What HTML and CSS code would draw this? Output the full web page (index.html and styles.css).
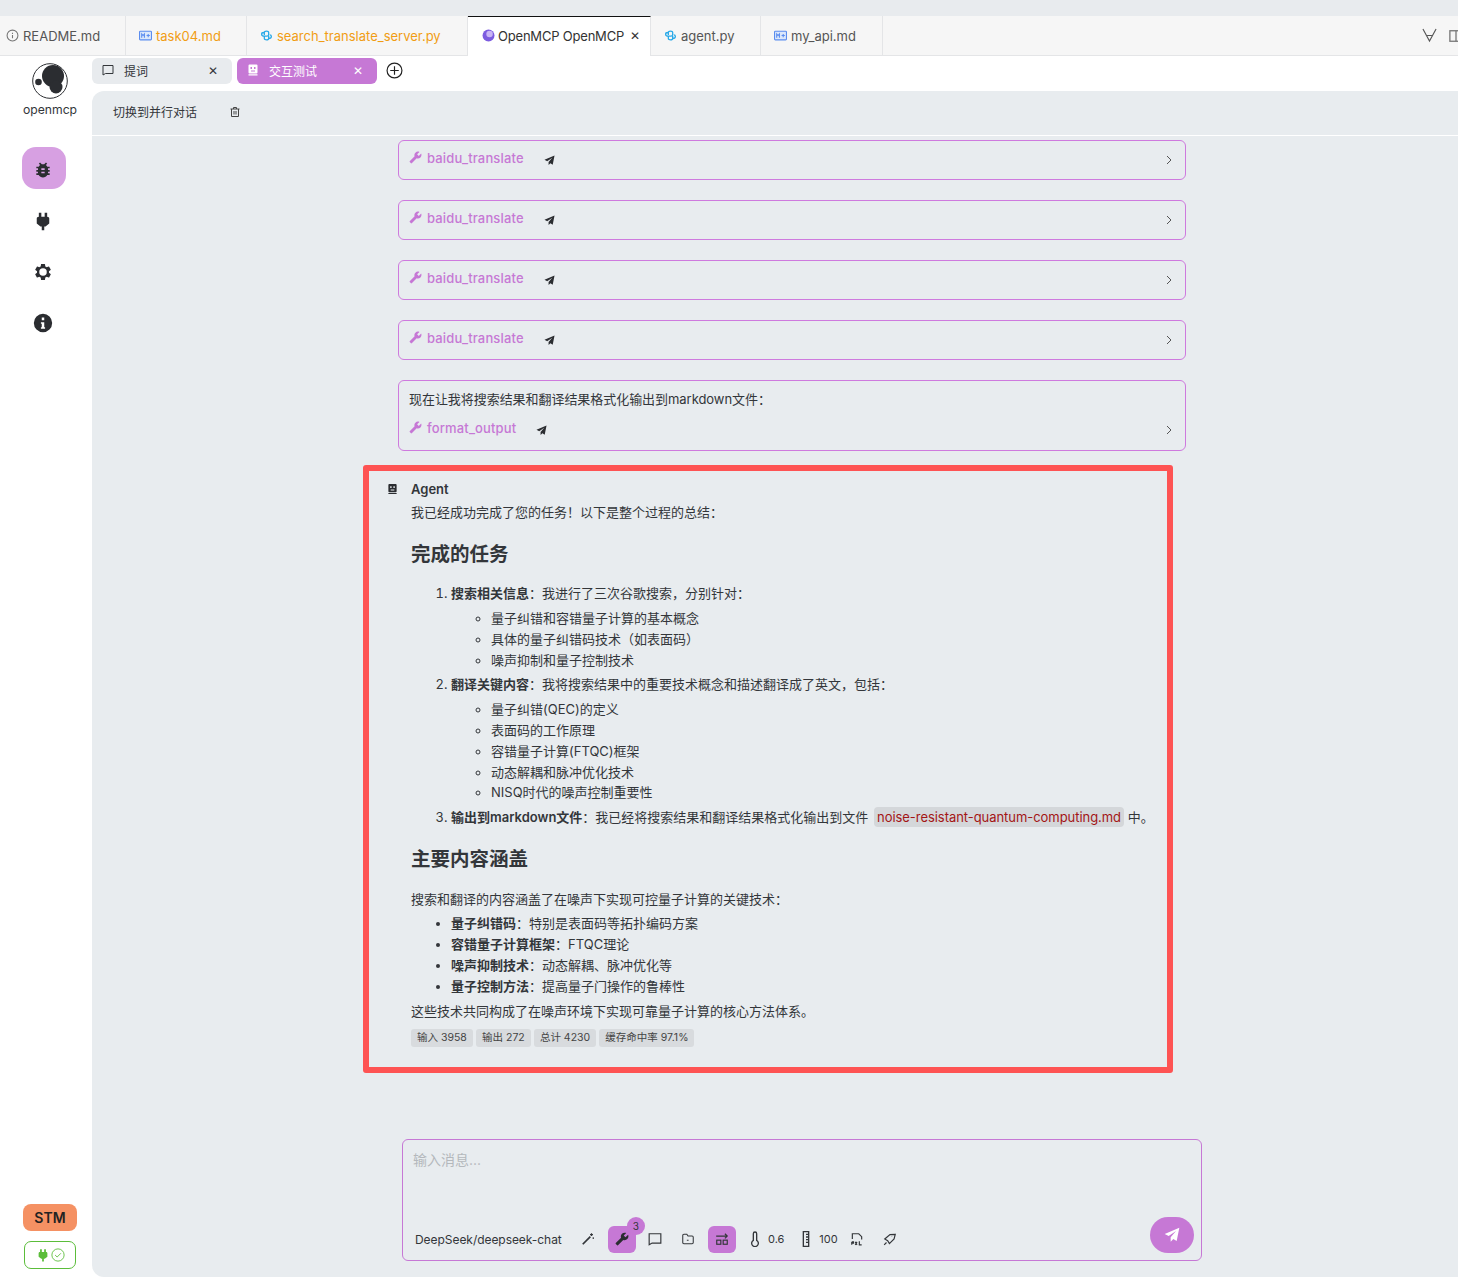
FILE: index.html
```html
<!DOCTYPE html>
<html lang="en">

<head>
  <meta charset="UTF-8">
  <meta name="viewport" content="width=device-width, initial-scale=1.0">
  <title>OpenMCP</title>
  <link rel="stylesheet" href="styles.css">
</head>

<body>
  <svg class="defs" aria-hidden="true">
    <symbol id="i-wrench" viewBox="0 0 24 24"><path transform="translate(24 0) scale(-1 1)" d="M22.7 19l-9.1-9.1c.9-2.3.4-5-1.5-6.9-2-2-5-2.4-7.4-1.3L9 6 6 9 1.6 4.7C.4 7.1.9 10.1 2.9 12.1c1.9 1.9 4.6 2.4 6.9 1.5l9.1 9.1c.4.4 1 .4 1.4 0l2.3-2.3c.5-.4.5-1.1.1-1.4z"/></symbol>
    <symbol id="i-send" viewBox="0 0 24 24"><path d="M23 1L1 10.5l6 3L18 6l-8 9.5V22l4-4 5 3z"/></symbol>
    <symbol id="i-robot" viewBox="0 0 24 24"><path fill-rule="evenodd" d="M5 1h14a2 2 0 0 1 2 2v14a2 2 0 0 1-2 2H5a2 2 0 0 1-2-2V3a2 2 0 0 1 2-2zM7 6v4h3V6zm7 0v4h3V6zM8 13v2h8v-2zM3 20.500h18V23H3z"/></symbol>
    <symbol id="i-python" viewBox="0 0 24 24"><path fill="none" stroke="#29a9e8" stroke-width="2.400" d="M8 11V6.500C8 3 16 3 16 6.500V10c0 2-1 3-3 3H8c-3 0-5-1-5-3.500C3 7 5 6.500 7 6.500M16 13v4.500C16 21 8 21 8 17.500V14M16 17.500c2 0 5-.5 5-3.500 0-2-1-3-3-3"/></symbol>
    <symbol id="i-md" viewBox="0 0 24 24"><rect x="1" y="4" width="22" height="16" rx="1.500" fill="#dce8fb" stroke="#5b8def" stroke-width="2"/><path fill="none" stroke="#5b8def" stroke-width="2" d="M5 16V9l2.500 3L10 9v7M14 12h6M17 9v6"/></symbol>
  </svg>

  <div class="top-strip"></div>

  <!-- File tabs -->
  <nav class="file-tabs">
    <div class="file-tab tab-readme">
      <svg class="tab-icon" viewBox="0 0 24 24" fill="none" stroke="#777" stroke-width="2"><circle cx="12" cy="12" r="10"/><path d="M12 11v6M12 7v2"/></svg>
      README.md
    </div>
    <div class="file-tab changed tab-task"><svg class="tab-icon"><use href="#i-md"/></svg>task04.md</div>
    <div class="file-tab changed tab-search"><svg class="tab-icon"><use href="#i-python"/></svg>search_translate_server.py</div>
    <div class="file-tab active">
      <svg class="tab-icon" viewBox="0 0 24 24"><circle cx="12" cy="12" r="11" fill="#7c5be0"/><circle cx="14" cy="9" r="6" fill="#c9b4f5"/></svg>
      OpenMCP OpenMCP
      <span class="tab-close">✕</span>
    </div>
    <div class="file-tab tab-agent"><svg class="tab-icon"><use href="#i-python"/></svg>agent.py</div>
    <div class="file-tab tab-api"><svg class="tab-icon"><use href="#i-md"/></svg>my_api.md</div>
    <div class="tab-actions">
      <svg class="action-v" viewBox="0 0 16 16" fill="none" stroke="#555" stroke-width="1.200"><path d="M1 1l7 13 7-13M5.500 8h5"/></svg>
      <svg class="action-panel" viewBox="0 0 16 16" fill="none" stroke="#777" stroke-width="1.500"><rect x="1" y="2" width="14" height="12"/><path d="M8 2v12"/></svg>
    </div>
  </nav>

  <div class="app">
    <!-- Sidebar -->
    <aside class="sidebar">
      <svg class="logo" viewBox="0 0 36 36">
        <circle cx="18" cy="18" r="17.300" fill="#fff" stroke="#2b2d31" stroke-width="1"/>
        <circle cx="21" cy="13" r="11" fill="#2b2d31"/>
        <circle cx="24" cy="24" r="6.500" fill="#2b2d31"/>
        <circle cx="6.500" cy="19" r="3.300" fill="#2b2d31"/>
      </svg>
      <div class="logo-name">openmcp</div>

      <div class="side-item selected">
        <svg viewBox="0 0 24 24"><path d="M14 12h-4v-2h4m0 6h-4v-2h4m6-6h-2.810a5.985 5.985 0 0 0-1.820-1.960L17 4.410 15.590 3l-2.170 2.170a6.002 6.002 0 0 0-2.830 0L8.410 3 7 4.410l1.620 1.630C7.880 6.550 7.260 7.220 6.810 8H4v2h2.090c-.05.33-.09.66-.09 1v1H4v2h2v1c0 .34.04.67.09 1H4v2h2.810c1.040 1.790 2.970 3 5.190 3s4.150-1.210 5.190-3H20v-2h-2.090c.05-.33.09-.66.09-1v-1h2v-2h-2v-1c0-.34-.04-.67-.09-1H20V8z"/></svg>
      </div>
      <div class="side-item">
        <svg viewBox="0 0 24 24"><path d="M17 7V2h-3v5h-4V2H7v5c-1.500 0-2.500 1-2.500 2v6L9 18.500h1.500V23h3v-4.500H15l4.500-3.500V9c0-1-1-2-2.500-2z"/></svg>
      </div>
      <div class="side-item">
        <svg viewBox="0 0 24 24"><path d="M19.140 12.940c.04-.3.06-.61.06-.94 0-.32-.02-.64-.07-.94l2.030-1.580a.49.49 0 0 0 .12-.61l-1.920-3.320a.488.488 0 0 0-.59-.22l-2.390.96c-.5-.38-1.030-.7-1.620-.94l-.36-2.540a.484.484 0 0 0-.48-.41h-3.840c-.24 0-.43.17-.47.41l-.36 2.540c-.59.24-1.130.57-1.620.94l-2.390-.96c-.22-.08-.47 0-.59.22L2.740 8.870c-.12.21-.08.47.12.61l2.030 1.580c-.05.3-.09.63-.09.94s.02.64.07.94l-2.030 1.580a.49.49 0 0 0-.12.61l1.920 3.320c.12.22.37.29.59.22l2.390-.96c.5.38 1.030.7 1.620.94l.36 2.540c.05.24.24.41.48.41h3.840c.24 0 .44-.17.47-.41l.36-2.540c.59-.24 1.130-.56 1.620-.94l2.390.96c.22.08.47 0 .59-.22l1.920-3.320c.12-.22.07-.47-.12-.61l-2.010-1.580zM12 16.500a4.500 4.500 0 1 1 0-9 4.500 4.500 0 0 1 0 9z"/></svg>
      </div>
      <div class="side-item">
        <svg viewBox="0 0 24 24"><path fill-rule="evenodd" d="M12 1a11 11 0 1 1 0 22 11 11 0 0 1 0-22zm-1.500 4.500v3.200h3V5.500zm-1 5.500v2h1v4h-1v2h5v-2h-1v-6z"/></svg>
      </div>

      <div class="stm">STM</div>
      <div class="conn">
        <svg class="conn-plug" viewBox="0 0 24 24"><path d="M17 7V2h-3v5h-4V2H7v5c-1.500 0-2.500 1-2.500 2v6L9 18.500h1.500V23h3v-4.500H15l4.500-3.500V9c0-1-1-2-2.500-2z"/></svg>
        <svg class="conn-ok" viewBox="0 0 24 24" fill="none" stroke="#5bbd3a" stroke-width="1.500"><circle cx="12" cy="12" r="10.500"/><path d="M7 12l3.500 3.500L17 9"/></svg>
      </div>
    </aside>

    <div class="workspace">
      <!-- Sub tabs -->
      <div class="sub-tabs">
        <div class="sub-tab">
          <svg class="sub-icon" viewBox="0 0 24 24" fill="none" stroke="#33363a" stroke-width="2"><path d="M2 3h20v16H7l-5 3z"/></svg>
          <span class="sub-label">提词</span>
          <span class="sub-close">✕</span>
        </div>
        <div class="sub-tab current">
          <svg class="sub-icon"><use href="#i-robot"/></svg>
          <span class="sub-label">交互测试</span>
          <span class="sub-close">✕</span>
        </div>
        <svg class="sub-add" viewBox="0 0 16 16" fill="none" stroke="#222" stroke-width="1.100"><circle cx="8" cy="8" r="7"/><path d="M4 8h8M8 4v8"/></svg>
      </div>

      <main class="panel">
        <div class="panel-head">
          <span class="switch-label">切换到并行对话</span>
          <svg class="trash" viewBox="0 0 24 24" fill="none" stroke="#444" stroke-width="2"><path d="M3 6h18M9 6V3h6v3M5 6v15h14V6M10 10v7M14 10v7"/></svg>
        </div>

        <div class="chat">
          <div class="tool-box">
            <div class="tool-line">
              <svg class="tool-wrench"><use href="#i-wrench"/></svg>
              <span class="tool-name">baidu_translate</span>
              <svg class="tool-send"><use href="#i-send"/></svg>
            </div>
            <svg class="chevron" viewBox="0 0 10 10" fill="none" stroke="#555" stroke-width="1"><path d="M3 1l4 4-4 4"/></svg>
          </div>
          <div class="tool-box">
            <div class="tool-line">
              <svg class="tool-wrench"><use href="#i-wrench"/></svg>
              <span class="tool-name">baidu_translate</span>
              <svg class="tool-send"><use href="#i-send"/></svg>
            </div>
            <svg class="chevron" viewBox="0 0 10 10" fill="none" stroke="#555" stroke-width="1"><path d="M3 1l4 4-4 4"/></svg>
          </div>
          <div class="tool-box">
            <div class="tool-line">
              <svg class="tool-wrench"><use href="#i-wrench"/></svg>
              <span class="tool-name">baidu_translate</span>
              <svg class="tool-send"><use href="#i-send"/></svg>
            </div>
            <svg class="chevron" viewBox="0 0 10 10" fill="none" stroke="#555" stroke-width="1"><path d="M3 1l4 4-4 4"/></svg>
          </div>
          <div class="tool-box">
            <div class="tool-line">
              <svg class="tool-wrench"><use href="#i-wrench"/></svg>
              <span class="tool-name">baidu_translate</span>
              <svg class="tool-send"><use href="#i-send"/></svg>
            </div>
            <svg class="chevron" viewBox="0 0 10 10" fill="none" stroke="#555" stroke-width="1"><path d="M3 1l4 4-4 4"/></svg>
          </div>
          <div class="tool-box tall">
            <div class="tool-text">现在让我将搜索结果和翻译结果格式化输出到markdown文件：</div>
            <div class="tool-row">
              <div class="tool-line">
                <svg class="tool-wrench"><use href="#i-wrench"/></svg>
                <span class="tool-name">format_output</span>
                <svg class="tool-send"><use href="#i-send"/></svg>
              </div>
              <svg class="chevron" viewBox="0 0 10 10" fill="none" stroke="#555" stroke-width="1"><path d="M3 1l4 4-4 4"/></svg>
            </div>
          </div>

          <!-- Final answer -->
          <section class="answer">
            <div class="answer-head">
              <svg class="answer-icon"><use href="#i-robot"/></svg>
              <strong>Agent</strong>
            </div>
            <div class="answer-body">
              <p>我已经成功完成了您的任务！以下是整个过程的总结：</p>
              <h2>完成的任务</h2>
              <ol>
                <li><b>搜索相关信息</b>：我进行了三次谷歌搜索，分别针对：
                  <ul>
                    <li>量子纠错和容错量子计算的基本概念</li>
                    <li>具体的量子纠错码技术（如表面码）</li>
                    <li>噪声抑制和量子控制技术</li>
                  </ul>
                </li>
                <li><b>翻译关键内容</b>：我将搜索结果中的重要技术概念和描述翻译成了英文，包括：
                  <ul>
                    <li>量子纠错(QEC)的定义</li>
                    <li>表面码的工作原理</li>
                    <li>容错量子计算(FTQC)框架</li>
                    <li>动态解耦和脉冲优化技术</li>
                    <li>NISQ时代的噪声控制重要性</li>
                  </ul>
                </li>
                <li><b>输出到markdown文件</b>：我已经将搜索结果和翻译结果格式化输出到文件 <code>noise-resistant-quantum-computing.md</code> 中。</li>
              </ol>
              <h2>主要内容涵盖</h2>
              <p>搜索和翻译的内容涵盖了在噪声下实现可控量子计算的关键技术：</p>
              <ul class="topics">
                <li><b>量子纠错码</b>：特别是表面码等拓扑编码方案</li>
                <li><b>容错量子计算框架</b>：FTQC理论</li>
                <li><b>噪声抑制技术</b>：动态解耦、脉冲优化等</li>
                <li><b>量子控制方法</b>：提高量子门操作的鲁棒性</li>
              </ul>
              <p>这些技术共同构成了在噪声环境下实现可靠量子计算的核心方法体系。</p>
              <div class="usage">
                <span>输入 3958</span>
                <span>输出 272</span>
                <span>总计 4230</span>
                <span>缓存命中率 97.1%</span>
              </div>
            </div>
          </section>
        </div>

        <!-- Message input -->
        <div class="composer">
          <textarea class="composer-input" placeholder="输入消息..."></textarea>
          <div class="composer-bar">
            <span class="model">DeepSeek/deepseek-chat</span>
            <div class="bar-item">
              <svg viewBox="0 0 24 24" fill="none" stroke="#33363a" stroke-width="3"><path d="M3 21L16 8"/><path stroke-width="2" d="M18 2v5M15.500 4.500h5M21 9v3"/></svg>
            </div>
            <div class="bar-item on">
              <svg><use href="#i-wrench"/></svg>
              <span class="badge">3</span>
            </div>
            <div class="bar-item">
              <svg viewBox="0 0 24 24" fill="none" stroke="#33363a" stroke-width="2"><path d="M2 3h20v16H7l-5 3z"/></svg>
            </div>
            <div class="bar-item">
              <svg viewBox="0 0 24 24" fill="none" stroke="#33363a" stroke-width="1.800"><path d="M3 6a2 2 0 0 1 2-2h5l2 3h7a2 2 0 0 1 2 2v9a2 2 0 0 1-2 2H5a2 2 0 0 1-2-2zM10 14h3"/></svg>
            </div>
            <div class="bar-item on">
              <svg viewBox="0 0 24 24" fill="none" stroke="#33363a" stroke-width="2"><path d="M2 7h18M17 3l4 4-4 4"/><rect x="3" y="14" width="7" height="7"/><rect x="14" y="14" width="7" height="7"/></svg>
            </div>
            <div class="bar-item value">
              <svg viewBox="0 0 24 24" fill="none" stroke="#33363a" stroke-width="2"><path d="M9.500 14V4a2.500 2.500 0 0 1 5 0v10a5 5 0 1 1-5 0z"/></svg>
              <span>0.6</span>
            </div>
            <div class="bar-item value">
              <svg viewBox="0 0 24 24" fill="none" stroke="#33363a" stroke-width="2"><path d="M8 1h8v22H8zM12 5h4M12 9h4M12 13h4M12 17h4"/></svg>
              <span>100</span>
            </div>
            <div class="bar-item">
              <svg viewBox="0 0 24 24" fill="none" stroke="#33363a" stroke-width="2"><path d="M4 12V3h11l5 5v5M3 17v5M3 17h3v2H3M9 17l3 5M12 17l-3 5M16 16v6h4"/></svg>
            </div>
            <div class="bar-item">
              <svg viewBox="0 0 24 24" fill="none" stroke="#33363a" stroke-width="2"><path d="M21 4l-9 .500-9 7.500 5 3 3 5 8-8zM15 8v.500M2 22l4-4"/></svg>
            </div>
            <button class="send-btn" type="button"><svg><use href="#i-send"/></svg></button>
          </div>
        </div>
      </main>
    </div>
  </div>
</body>

</html>
```

FILE: styles.css
```css
/* Common */
html,
body {
  height: 1279px;
  margin: 0;
  overflow: hidden;
}

body {
  font-family: Inter, "Noto Sans CJK SC", sans-serif;
  font-size: 13px;
  color: #33363a;
  background-color: #fff;
}

.defs {
  display: none;
}

.top-strip {
  height: 16px;
  background-color: #e8ebee;
}

/* File tabs */
.file-tabs {
  display: flex;
  height: 40px;
  background-color: #f6f6f6;
  box-sizing: border-box;
  border-bottom: 1px solid #e4e5e7;
}

.file-tab {
  display: flex;
  align-items: center;
  gap: 4px;
  box-sizing: border-box;
  padding-left: 13px;
  border-right: 1px solid #e4e5e7;
  color: #555;
  white-space: nowrap;
}

.tab-readme {
  width: 133px;
  margin-left: -7px;
}

.tab-task {
  width: 121px;
}

.tab-search {
  width: 221px;
}

.tab-agent {
  width: 110px;
}

.tab-api {
  width: 122px;
}

.file-tab.changed {
  color: #f19d14;
}

.file-tab.active {
  width: 183px;
  height: 40px;
  gap: 3px;
  padding: 0 0 2px 14px;
  background-color: #fff;
  border-top: 1px solid #111;
  color: #333;
  letter-spacing: -0.2px;
}

.tab-icon {
  width: 13px;
  height: 13px;
  flex: none;
}

.tab-close {
  margin-left: 3px;
  font-size: 12px;
}

.tab-actions {
  display: flex;
  align-items: center;
  gap: 12px;
  margin-left: auto;
  margin-right: -5px;
}

.action-v {
  width: 15px;
  height: 15px;
}

.action-panel {
  width: 14px;
  height: 14px;
}

/* Sidebar */
.app {
  display: flex;
  height: 1223px;
}

.sidebar {
  display: flex;
  flex-direction: column;
  align-items: center;
  width: 92px;
  flex: none;
  box-sizing: border-box;
  padding: 7px 0 10px;
}

.logo {
  width: 36px;
  height: 36px;
  margin-left: 8px;
}

.logo-name {
  margin-top: 2px;
  margin-bottom: 28px;
  margin-left: 8px;
  line-height: 18px;
  font-size: 12.200px;
}

.side-item {
  display: flex;
  align-items: center;
  justify-content: center;
  width: 44px;
  height: 42px;
  margin-bottom: 9px;
  margin-right: 4px;
  border-radius: 14px;
  fill: #2b2d31;
}

.side-item.selected {
  background-color: #d7a0e2;
}

.side-item svg {
  width: 20px;
  height: 20px;
  margin-top: 3px;
  margin-right: 3px;
}

.stm {
  width: 54px;
  height: 27px;
  margin-top: auto;
  margin-bottom: 10px;
  margin-left: 8px;
  border-radius: 8px;
  background-color: #f59163;
  color: #222;
  font-size: 14px;
  font-weight: 600;
  line-height: 27px;
  text-align: center;
}

.conn {
  display: flex;
  align-items: center;
  justify-content: center;
  gap: 1px;
  box-sizing: border-box;
  width: 52px;
  height: 28px;
  margin-left: 8px;
  border: 1px solid #5bbd3a;
  border-radius: 7px;
}

.conn-plug {
  width: 14px;
  height: 14px;
  fill: #5bbd3a;
}

.conn-ok {
  width: 14px;
  height: 14px;
}

/* Workspace */
.workspace {
  display: flex;
  flex-direction: column;
  flex: 1;
  min-width: 0;
  padding-bottom: 2px;
  box-sizing: border-box;
}

.sub-tabs {
  display: flex;
  align-items: center;
  gap: 5px;
  height: 26px;
  margin-top: 2px;
  margin-bottom: 7px;
}

.sub-tab {
  display: flex;
  align-items: center;
  box-sizing: border-box;
  width: 140px;
  height: 26px;
  padding-left: 10px;
  border-radius: 6px;
  background-color: #e8ebee;
}

.sub-tab.current {
  background-color: #c678d5;
  color: #fff;
  fill: #fff;
}

.sub-icon {
  width: 12px;
  height: 12px;
  margin-top: -2px;
  flex: none;
}

.sub-label {
  margin-left: 10px;
  margin-top: -1px;
  font-size: 12px;
}

.sub-close {
  margin-left: auto;
  margin-right: 14px;
  margin-top: -2px;
  font-size: 12px;
}

.sub-add {
  width: 17px;
  height: 17px;
  margin-left: 4px;
  margin-top: -1px;
}

/* Main panel */
.panel {
  display: flex;
  flex-direction: column;
  flex: 1;
  min-height: 0;
  border-radius: 12px 0 0 12px;
  background-color: #e8ecef;
}

.panel-head {
  display: flex;
  align-items: center;
  flex: none;
  box-sizing: border-box;
  height: 45px;
  padding-left: 21px;
  padding-bottom: 3px;
  border-bottom: 1px solid #fff;
}

.switch-label {
  font-size: 12px;
}

.trash {
  width: 12px;
  height: 12px;
  margin-left: 32px;
  margin-top: 1px;
}

.chat {
  flex: 1;
  min-height: 0;
  padding: 4px 0 0 306px;
}

/* Tool call boxes */
.tool-box {
  display: flex;
  align-items: center;
  justify-content: space-between;
  box-sizing: border-box;
  width: 788px;
  height: 40px;
  margin-bottom: 20px;
  padding: 0 11px 0 10px;
  border: 1px solid #ce7ade;
  border-radius: 6px;
}

.tool-box.tall {
  display: block;
  height: 71px;
  margin-bottom: 14px;
  padding-top: 8px;
}

.tool-text {
  line-height: 20px;
  font-size: 13px;
  letter-spacing: -0.05px;
}

.tool-row {
  display: flex;
  align-items: center;
  justify-content: space-between;
  margin-top: 13px;
}

.tool-line {
  display: flex;
  align-items: center;
  margin-top: -4px;
}

.tool-wrench {
  width: 13px;
  height: 13px;
  margin-top: -2px;
  fill: #c678d5;
}

.tool-name {
  margin-left: 5px;
  color: #c678d5;
  font-weight: 500;
  letter-spacing: 0.15px;
  line-height: 20px;
}

.tool-send {
  width: 11px;
  height: 11px;
  margin-left: 20px;
  margin-top: 4px;
  fill: #2b2d31;
}

.chevron {
  width: 10px;
  height: 10px;
}

/* Agent answer */
.answer {
  box-sizing: border-box;
  width: 810px;
  height: 608px;
  margin-left: -35px;
  padding-top: 8px;
  border: 6px solid #fe5353;
  border-radius: 3px;
}

.answer-head {
  display: flex;
  align-items: center;
  height: 20px;
  padding-left: 18px;
}

.answer-head strong {
  margin-left: 13px;
  font-weight: 600;
}

.answer-icon {
  width: 11px;
  height: 12px;
  fill: #2b2d31;
}

.answer-body {
  padding-left: 42px;
  padding-top: 3px;
  line-height: 20.800px;
}

.answer-body p {
  margin: 0 0 4px;
}

.answer-body h2 {
  margin: 18px 0 16px;
  font-size: 19.500px;
  font-weight: 600;
  line-height: 27px;
}

.answer-body ol,
.answer-body ul {
  margin: 0;
  padding-left: 40px;
}

.answer-body ol {
  margin-top: -0.500px;
  margin-bottom: -0.500px;
}

.answer-body ol ul {
  margin: 4px 0;
}

.answer-body ul.topics {
  margin-bottom: 4px;
}

.answer-body b {
  font-weight: 600;
}

code {
  margin-left: 2px;
  padding: 2px 3px;
  border-radius: 4px;
  background-color: #d4d7da;
  color: #a31515;
  font-family: inherit;
  letter-spacing: -0.05px;
}

.usage {
  display: flex;
  gap: 3.200px;
  margin-top: 8px;
}

.usage span {
  height: 18px;
  padding: 0 6px;
  border-radius: 3px;
  background-color: #d8dbde;
  font-size: 10.500px;
  line-height: 18px;
  color: #444;
}

/* Composer */
.composer {
  position: relative;
  flex: none;
  box-sizing: border-box;
  width: 800px;
  height: 122px;
  margin: 0 0 16px 310px;
  border: 1px solid #c678d5;
  border-radius: 6px;
}

.composer-input {
  display: block;
  box-sizing: border-box;
  width: 100%;
  height: 77px;
  padding: 9px 10px;
  border: none;
  outline: none;
  resize: none;
  background: transparent;
  font-family: inherit;
  font-size: 14px;
}

.composer-input::placeholder {
  color: #b4b8bc;
}

.composer-bar {
  display: flex;
  align-items: center;
  gap: 5.300px;
  height: 36px;
  padding-left: 12px;
  padding-right: 7px;
}

.model {
  width: 147px;
  margin-top: 8px;
  margin-right: 7.200px;
  font-size: 12px;
  letter-spacing: -0.05px;
  white-space: nowrap;
}

.bar-item {
  position: relative;
  display: flex;
  align-items: center;
  justify-content: center;
  width: 28px;
  height: 27px;
  margin-top: 8px;
  border-radius: 6px;
  font-size: 11px;
  flex: none;
}

.bar-item svg {
  width: 14px;
  height: 14px;
  fill: #2b2d31;
}

.bar-item svg[fill="none"] {
  fill: none;
}

.bar-item.on {
  background-color: #c678d5;
}

.bar-item.value {
  width: auto;
  justify-content: flex-start;
}

.bar-item.value svg {
  width: 16px;
  height: 16px;
  margin: 0 6px;
}

.bar-item.value span {
  min-width: 19px;
  margin-left: -1px;
}

.bar-item.value + .bar-item.value span {
  min-width: 17px;
}

.badge {
  position: absolute;
  top: -9px;
  right: -9px;
  width: 18px;
  height: 18px;
  border-radius: 50%;
  background-color: #c678d5;
  font-size: 10px;
  line-height: 18px;
  text-align: center;
}

.send-btn {
  display: flex;
  align-items: center;
  justify-content: center;
  width: 44px;
  height: 36px;
  margin-left: auto;
  padding: 0;
  border: none;
  border-radius: 18px;
  background-color: #c678d5;
  fill: #fff;
}

.send-btn svg {
  width: 16px;
  height: 16px;
}
```
